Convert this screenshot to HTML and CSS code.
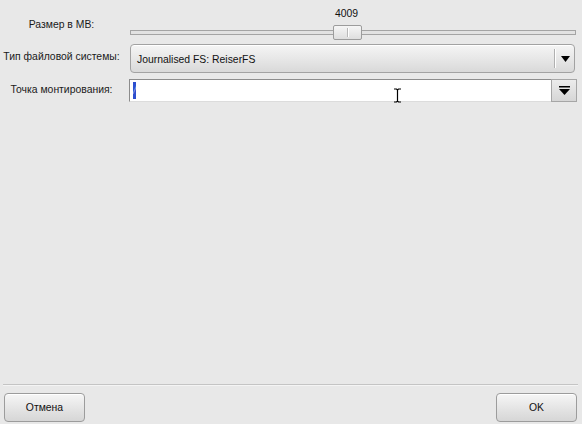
FILE: index.html
```html
<!DOCTYPE html>
<html>
	<head>
		<meta charset="utf-8" />
		<title>Раздел</title>
		<link rel="stylesheet" href="styles.css">
	</head>
	<body>
		<div class="form">
			<div class="label label-size">Размер в MB:</div>
			<div class="scale">
				<div class="scale-value">4009</div>
				<div class="scale-track">
					<div class="scale-bar"></div>
					<div class="scale-handle" style="left: 203px"></div>
				</div>
			</div>

			<div class="label">Тип файловой системы:</div>
			<div class="combo">
				<span class="combo-text">Journalised FS: ReiserFS</span>
				<span class="combo-sep"></span>
				<span class="combo-arrow">
					<svg width="9" height="6" viewBox="0 0 9 6"><path d="M0 0H9L4.5 6Z" fill="#000"/></svg>
				</span>
			</div>

			<div class="label label-mount">Точка монтирования:</div>
			<div class="entry">
				<div class="entry-field"><span class="selected">/</span></div>
				<div class="entry-button">
					<svg width="11" height="9" viewBox="0 0 11 9"><rect x="0" y="0" width="11" height="1.5" fill="#000"/><path d="M0 3H11L5.5 9Z" fill="#000"/></svg>
				</div>
				<svg class="mouse" width="9" height="15" viewBox="0 0 9 15"><path d="M1 1H3.5L4.5 2L5.5 1H8M4.5 2V13M1 14H3.5L4.5 13L5.5 14H8" stroke="#000" stroke-width="1.2" fill="none"/></svg>
			</div>
		</div>

		<div class="spacer"></div>
		<div class="separator"></div>

		<div class="buttons">
			<button class="btn">Отмена</button>
			<button class="btn">OK</button>
		</div>
	</body>
</html>
```

FILE: styles.css
```css
html, body {
	height: 100%;
}
body {
	margin: 0;
	background: #e8e8e8;
	font-family: "Liberation Sans", Arial, sans-serif;
	font-size: 10.4px;
	color: #111;
	display: flex;
	flex-direction: column;
}
.form {
	display: grid;
	grid-template-columns: 123px 1fr;
	column-gap: 6px;
	padding-right: 5px;
}
.label {
	text-align: center;
	align-self: center;
	white-space: nowrap;
	color: #1a1a1a;
}
.label-size {
	padding-top: 8px;
}
.label-mount {
	padding-top: 4px;
}
.scale {
	padding-top: 7px;
	padding-left: 1px;
	padding-right: 1px;
}
.scale-value {
	height: 13px;
	line-height: 13px;
	text-align: center;
	padding-right: 13px;
}
.scale-track {
	position: relative;
	height: 15px;
	margin-top: 5px;
	display: flex;
	align-items: center;
}
.scale-bar {
	flex: 1;
	height: 3px;
	border: 1px solid #a4a4a4;
	background: #e2e2e2;
}
.scale-handle {
	position: absolute;
	top: 0;
	width: 27px;
	height: 13px;
	border: 1px solid #9c9c9c;
	border-radius: 2px;
	background: linear-gradient(#f6f6f6, #dedede);
}
.scale-handle::after {
	content: "";
	position: absolute;
	left: 13px;
	top: 2px;
	width: 1px;
	height: 9px;
	background: #fff;
	border-left: 1px solid #b8b8b8;
}
.combo {
	margin: 4px 2px 0 1px;
	height: 27px;
	border: 1px solid #a2a2a2;
	border-radius: 4px;
	background: linear-gradient(#f5f5f5, #e6e6e6 55%, #d9d9d9);
	box-shadow: inset 0 1px 0 #fff;
	display: flex;
	align-items: center;
}
.combo-text {
	flex: 1;
	padding-left: 6px;
	padding-top: 1px;
}
.combo-sep {
	width: 1px;
	height: 19px;
	background: #fff;
	border-left: 1px solid #b0b0b0;
}
.combo-arrow {
	width: 17px;
	display: flex;
	justify-content: center;
	padding-left: 1px;
}
.entry {
	position: relative;
	margin-top: 6px;
	height: 23px;
	display: flex;
}
.entry-field {
	flex: 1;
	background: #fff;
	border-top: 1px solid #8c8c8c;
	border-left: 1px solid #8c8c8c;
	border-bottom: 1px solid #dcdcdc;
	display: flex;
	align-items: center;
	padding-left: 3px;
}
.selected {
	background: #2d4fcf;
	color: #8ea2e8;
	width: 3px;
	height: 17px;
	line-height: 17px;
	font-size: 12px;
	font-style: italic;
	overflow: hidden;
}
.entry-button {
	width: 24px;
	border: 1px solid #a6a6a6;
	background: linear-gradient(#ececec, #d6d6d6);
	display: flex;
	align-items: center;
	justify-content: center;
}
.mouse {
	position: absolute;
	left: 264px;
	top: 9px;
}
.spacer {
	flex: 1;
}
.separator {
	margin: 0 4px 0 3px;
	height: 1px;
	background: #c4c4c4;
	border-bottom: 1px solid #f4f4f4;
}
.buttons {
	display: flex;
	justify-content: space-between;
	padding: 7px 5px 2px 4px;
}
.btn {
	width: 81px;
	height: 29px;
	font-family: "Liberation Sans", Arial, sans-serif;
	font-size: 10.4px;
	color: #111;
	border: 1px solid #9c9c9c;
	border-radius: 4px;
	background: linear-gradient(#f6f6f6, #e4e4e4 55%, #d6d6d6);
	box-shadow: inset 0 1px 0 #fff;
	padding: 0;
}
```
